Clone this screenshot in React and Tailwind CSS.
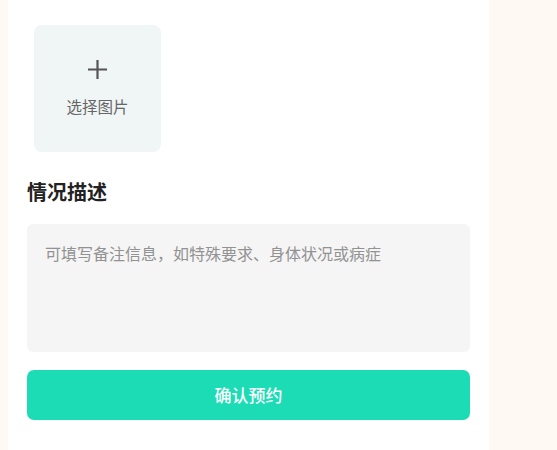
import React from 'react';

const font = { fontFamily: '"Noto Sans CJK SC", "Noto Sans", sans-serif' };

export default function App() {
  return (
    <div className="w-[557px] h-[450px] bg-[#fefaf3] flex overflow-hidden" style={font}>
      <div className="ml-[8px] w-[481px] h-full bg-white flex flex-col px-[19px]">
        {/* Upload */}
        <div className="mt-[25px] ml-[7px] w-[127px] h-[127px] rounded-[8px] bg-[#f0f5f5] flex flex-col items-center">
          <svg className="mt-[34px]" width="21" height="21" viewBox="0 0 21 21">
            <path d="M10.5 1v19M1 10.5h19" stroke="#555" strokeWidth="2.2" />
          </svg>
          <span className="mt-[19px] text-[15.5px] leading-none text-[#666]">选择图片</span>
        </div>

        {/* Description */}
        <h3 className="mt-[30px] text-[20px] leading-none font-bold text-[#222]">情况描述</h3>

        <div className="mt-[22px] w-[443px] h-[128px] rounded-[6px] bg-[#f5f5f5] px-[18px] pt-[21px]">
          <p className="text-[16px] leading-none text-[#929292]">可填写备注信息，如特殊要求、身体状况或病症</p>
        </div>

        <button className="mt-[18px] w-[443px] h-[50px] rounded-[7px] bg-[#1cdcb6] text-white text-[17px] font-medium flex items-center justify-center">
          确认预约
        </button>
      </div>
    </div>
  );
}
